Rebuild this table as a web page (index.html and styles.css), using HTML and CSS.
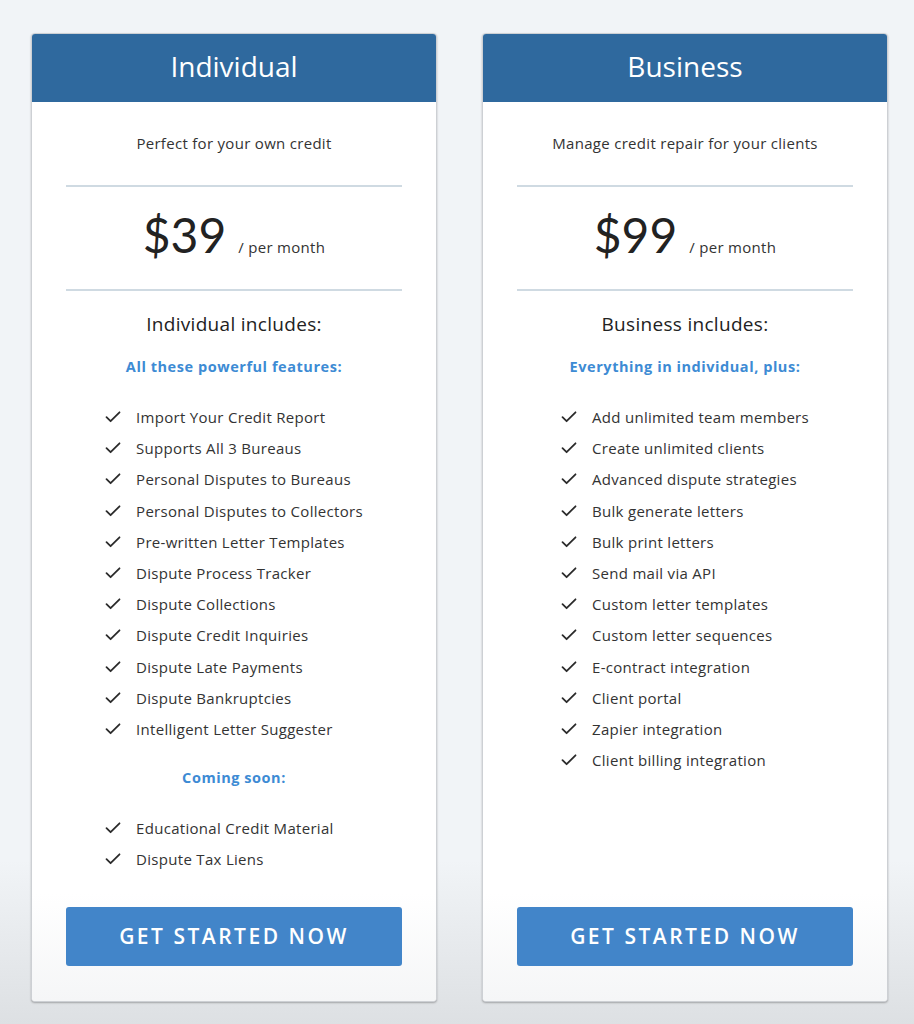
FILE: index.html
```html
<!DOCTYPE html>
<html lang="en">
<head>
<meta charset="utf-8">
<title>Pricing</title>
<link rel="stylesheet" href="styles.css">
</head>
<body>
<main class="plans">
  <section class="card">
    <header class="card-head">Individual</header>
    <div class="card-body">
      <div class="details">
        <p class="tagline">Perfect for your own credit</p>
        <hr class="rule">
        <div class="price"><span class="amount">$39</span><span class="period">/ per month</span></div>
        <hr class="rule rule-tight">
        <h3 class="includes">Individual includes:</h3>
        <h4 class="group">All these powerful features:</h4>
        <div class="feature-block">
          <ul class="features">
            <li><svg class="check" viewBox="0 0 16 12"><path d="M1.5 6.2 L5.6 10.2 L14.5 1.3"/></svg>Import Your Credit Report</li>
            <li><svg class="check" viewBox="0 0 16 12"><path d="M1.5 6.2 L5.6 10.2 L14.5 1.3"/></svg>Supports All 3 Bureaus</li>
            <li><svg class="check" viewBox="0 0 16 12"><path d="M1.5 6.2 L5.6 10.2 L14.5 1.3"/></svg>Personal Disputes to Bureaus</li>
            <li><svg class="check" viewBox="0 0 16 12"><path d="M1.5 6.2 L5.6 10.2 L14.5 1.3"/></svg>Personal Disputes to Collectors</li>
            <li><svg class="check" viewBox="0 0 16 12"><path d="M1.5 6.2 L5.6 10.2 L14.5 1.3"/></svg>Pre-written Letter Templates</li>
            <li><svg class="check" viewBox="0 0 16 12"><path d="M1.5 6.2 L5.6 10.2 L14.5 1.3"/></svg>Dispute Process Tracker</li>
            <li><svg class="check" viewBox="0 0 16 12"><path d="M1.5 6.2 L5.6 10.2 L14.5 1.3"/></svg>Dispute Collections</li>
            <li><svg class="check" viewBox="0 0 16 12"><path d="M1.5 6.2 L5.6 10.2 L14.5 1.3"/></svg>Dispute Credit Inquiries</li>
            <li><svg class="check" viewBox="0 0 16 12"><path d="M1.5 6.2 L5.6 10.2 L14.5 1.3"/></svg>Dispute Late Payments</li>
            <li><svg class="check" viewBox="0 0 16 12"><path d="M1.5 6.2 L5.6 10.2 L14.5 1.3"/></svg>Dispute Bankruptcies</li>
            <li><svg class="check" viewBox="0 0 16 12"><path d="M1.5 6.2 L5.6 10.2 L14.5 1.3"/></svg>Intelligent Letter Suggester</li>
          </ul>
          <h4 class="group group-later">Coming soon:</h4>
          <ul class="features">
            <li><svg class="check" viewBox="0 0 16 12"><path d="M1.5 6.2 L5.6 10.2 L14.5 1.3"/></svg>Educational Credit Material</li>
            <li><svg class="check" viewBox="0 0 16 12"><path d="M1.5 6.2 L5.6 10.2 L14.5 1.3"/></svg>Dispute Tax Liens</li>
          </ul>
        </div>
      </div>
      <a class="cta" href="#">Get Started Now</a>
    </div>
  </section>
  <section class="card">
    <header class="card-head">Business</header>
    <div class="card-body">
      <div class="details">
        <p class="tagline">Manage credit repair for your clients</p>
        <hr class="rule">
        <div class="price"><span class="amount">$99</span><span class="period">/ per month</span></div>
        <hr class="rule rule-tight">
        <h3 class="includes">Business includes:</h3>
        <h4 class="group">Everything in individual, plus:</h4>
        <div class="feature-block">
          <ul class="features">
            <li><svg class="check" viewBox="0 0 16 12"><path d="M1.5 6.2 L5.6 10.2 L14.5 1.3"/></svg>Add unlimited team members</li>
            <li><svg class="check" viewBox="0 0 16 12"><path d="M1.5 6.2 L5.6 10.2 L14.5 1.3"/></svg>Create unlimited clients</li>
            <li><svg class="check" viewBox="0 0 16 12"><path d="M1.5 6.2 L5.6 10.2 L14.5 1.3"/></svg>Advanced dispute strategies</li>
            <li><svg class="check" viewBox="0 0 16 12"><path d="M1.5 6.2 L5.6 10.2 L14.5 1.3"/></svg>Bulk generate letters</li>
            <li><svg class="check" viewBox="0 0 16 12"><path d="M1.5 6.2 L5.6 10.2 L14.5 1.3"/></svg>Bulk print letters</li>
            <li><svg class="check" viewBox="0 0 16 12"><path d="M1.5 6.2 L5.6 10.2 L14.5 1.3"/></svg>Send mail via API</li>
            <li><svg class="check" viewBox="0 0 16 12"><path d="M1.5 6.2 L5.6 10.2 L14.5 1.3"/></svg>Custom letter templates</li>
            <li><svg class="check" viewBox="0 0 16 12"><path d="M1.5 6.2 L5.6 10.2 L14.5 1.3"/></svg>Custom letter sequences</li>
            <li><svg class="check" viewBox="0 0 16 12"><path d="M1.5 6.2 L5.6 10.2 L14.5 1.3"/></svg>E-contract integration</li>
            <li><svg class="check" viewBox="0 0 16 12"><path d="M1.5 6.2 L5.6 10.2 L14.5 1.3"/></svg>Client portal</li>
            <li><svg class="check" viewBox="0 0 16 12"><path d="M1.5 6.2 L5.6 10.2 L14.5 1.3"/></svg>Zapier integration</li>
            <li><svg class="check" viewBox="0 0 16 12"><path d="M1.5 6.2 L5.6 10.2 L14.5 1.3"/></svg>Client billing integration</li>
          </ul>
        </div>
      </div>
      <a class="cta" href="#">Get Started Now</a>
    </div>
  </section>
</main>
</body>
</html>
```

FILE: styles.css
```css
html, body {
  margin: 0;
  padding: 0;
}
body {
  min-height: 1024px;
  background: linear-gradient(to bottom, #f1f4f7 0, #f1f4f7 84%, #dde0e3 100%);
  font-family: "Open Sans", "Liberation Sans", sans-serif;
  color: #333;
}
.plans {
  display: grid;
  grid-template-columns: 406px 406px;
  column-gap: 45px;
  padding: 33px 0 0 31px;
  align-items: stretch;
}
.card {
  display: flex;
  flex-direction: column;
  border: 1px solid #cdd0d4;
  border-radius: 4px;
  background: #fff;
  box-shadow: 0 1px 2px rgba(0, 0, 0, 0.28);
  overflow: hidden;
}
.card-head {
  height: 68px;
  line-height: 64px;
  background: #2f699e;
  color: #fff;
  text-align: center;
  font-size: 28px;
}
.card-body {
  flex: 1;
  display: flex;
  flex-direction: column;
  padding: 0 34px 35px;
  background: linear-gradient(to bottom, #fff 0, #fff 88%, #f5f6f7 100%);
}
.details {
  flex: 1;
  display: flex;
  flex-direction: column;
}
.tagline {
  margin: 31px 0 0;
  font-size: 15px;
  letter-spacing: 0.3px;
  line-height: 20px;
  text-align: center;
  color: #333;
}
.rule {
  margin: 32px 0 0;
  border: 0;
  height: 2px;
  background: #cfdae2;
}
.rule-tight { margin-top: 0; }
.price {
  height: 102px;
  display: flex;
  justify-content: center;
  align-items: baseline;
  padding-top: 20px;
  box-sizing: border-box;
}
.amount {
  font-family: Lato, "Open Sans", sans-serif;
  font-size: 48px;
  line-height: 56px;
  color: #222;
}
.period {
  margin-left: 12px;
  font-size: 15px;
  letter-spacing: 0.3px;
  color: #333;
}
.includes {
  margin: 21px 0 0;
  font-size: 19px;
  font-weight: 400;
  letter-spacing: 0.3px;
  line-height: 24px;
  text-align: center;
  color: #222;
}
.group {
  margin: 21px 0 0;
  font-size: 14.5px;
  font-weight: 700;
  line-height: 20px;
  text-align: center;
  color: #3d8bd4;
  letter-spacing: 0.55px;
}
.group-later { margin-top: 23px; }
.feature-block {
  align-self: center;
  display: flex;
  flex-direction: column;
}
.features {
  margin: 24.5px 0 0;
  padding: 0;
  list-style: none;
}
.features li {
  display: flex;
  align-items: center;
  height: 31.2px;
  font-size: 15px;
  letter-spacing: 0.3px;
  color: #333;
  white-space: nowrap;
}
.check {
  width: 16px;
  height: 12px;
  margin-right: 15px;
  flex: none;
  fill: none;
  stroke: #2b2b2b;
  stroke-width: 1.8;
  stroke-linecap: round;
  stroke-linejoin: round;
}
.cta {
  margin-top: 33px;
  display: block;
  height: 59px;
  line-height: 59px;
  border-radius: 3px;
  background: #4285c9;
  color: #fff;
  text-align: center;
  text-decoration: none;
  text-transform: uppercase;
  font-size: 21px;
  font-weight: 600;
  letter-spacing: 2.5px;
}
```
